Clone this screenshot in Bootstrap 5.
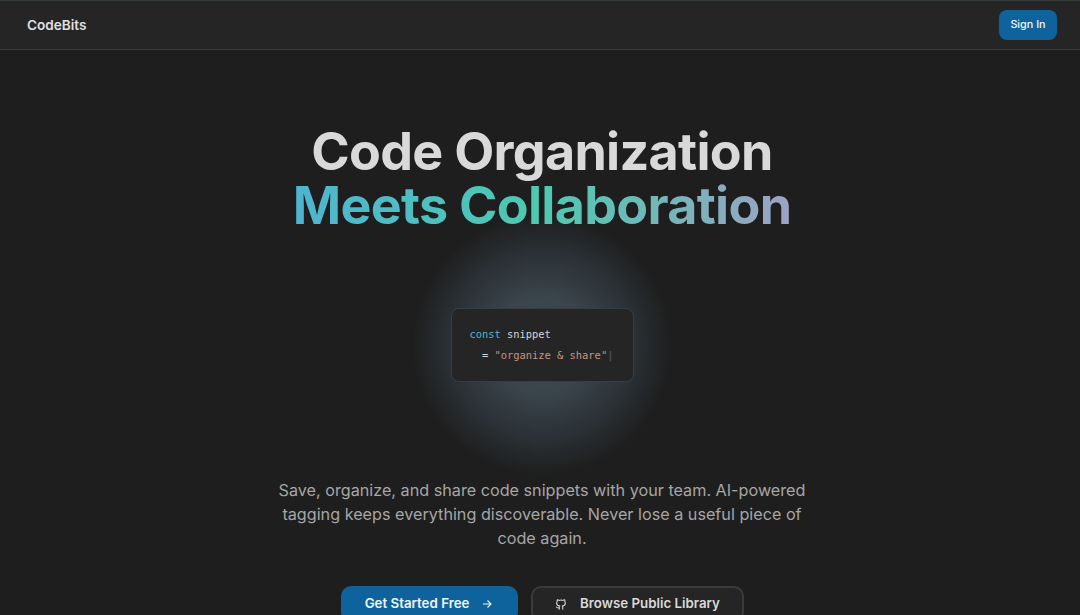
<!DOCTYPE html>
<html lang="en">
<head>
    <meta charset="UTF-8">
    <meta name="viewport" content="width=device-width, initial-scale=1.0">
    <title>CodeBits</title>
    <link rel="stylesheet" href="https://cdn.jsdelivr.net/npm/bootstrap@5.3.0/dist/css/bootstrap.min.css">
    <style>
        body {
            background: #1e1e1e;
            font-family: Inter, "Liberation Sans", sans-serif;
            height: 615px;
            overflow: hidden;
        }
        .top-bar {
            height: 50px;
            background: #252526;
            border-top: 1px solid #33383b;
            border-bottom: 1px solid #373c3f;
            padding: 0 23px 0 27px;
        }
        .brand-name {
            color: #e0e0e0;
            font-size: 13.6px;
            font-weight: 600;
        }
        .sign-btn {
            background: #0e639c;
            color: #f2f5f7;
            font-size: 10.8px;
            font-weight: 500;
            height: 30px;
            width: 58px;
            padding: 0;
            border: 0;
            border-radius: 8px;
        }
        .hero-wrap {
            padding-left: 4px;
        }
        .hero-title {
            font-size: 52px;
            font-weight: 700;
            line-height: 54px;
            letter-spacing: -0.7px;
            color: #d9d9d9;
            margin: 75px 0 0;
        }
        .grad-text {
            background: linear-gradient(90deg, #4fb4d0 0%, #4ec9b0 50%, #9ca3c4 100%);
            -webkit-background-clip: text;
            background-clip: text;
            color: transparent;
        }
        .glow-box {
            height: 267px;
            margin-top: -22px;
            background: radial-gradient(circle 130px at 50% 50%, #3f4a52 0%, #3a444b 38%, #2c3338 68%, #1e1e1e 100%);
            background-size: 260px 260px;
            background-repeat: no-repeat;
            background-position: center;
        }
        .code-card {
            width: 183px;
            height: 74px;
            background: #252526;
            border: 1px solid #373e43;
            border-radius: 8px;
            padding: 15px 18px;
            font-family: "DejaVu Sans Mono", monospace;
            font-size: 10.4px;
            line-height: 21px;
            color: #d4d4d4;
        }
        .kw { color: #4fb4d0; }
        .str { color: #ce9178; }
        .caret { color: #5a5f63; }
        .hero-sub {
            max-width: 545px;
            font-size: 16.2px;
            line-height: 24px;
            color: #a6a6a6;
            margin: 0 auto;
        }
        .cta-row {
            margin-top: 36px;
            gap: 13px;
        }
        .cta-main, .cta-alt {
            height: 36px;
            font-size: 13.3px;
            font-weight: 600;
            border-radius: 10px;
            padding: 0;
            gap: 12px;
            white-space: nowrap;
        }
        .cta-main {
            background: #0e639c;
            color: #f2f5f7;
            border: 0;
            width: 177px;
        }
        .cta-alt {
            background: #252526;
            color: #d9d9d9;
            border: 2px solid #373c3f;
            width: 213px;
        }
    </style>
</head>
<body>
    <nav class="top-bar d-flex align-items-center justify-content-between">
        <span class="brand-name">CodeBits</span>
        <button class="btn sign-btn">Sign In</button>
    </nav>

    <main class="hero-wrap text-center">
        <h1 class="hero-title">Code Organization<br><span class="grad-text">Meets Collaboration</span></h1>

        <div class="glow-box d-flex align-items-center justify-content-center">
            <div class="code-card text-start text-nowrap">
                <div><span class="kw">const</span> snippet</div>
                <div>&nbsp;&nbsp;= <span class="str">"organize &amp; share"</span><span class="caret">|</span></div>
            </div>
        </div>

        <p class="hero-sub">Save, organize, and share code snippets with your team. AI-powered tagging keeps everything discoverable. Never lose a useful piece of code again.</p>

        <div class="cta-row d-flex justify-content-center">
            <button class="btn cta-main d-flex align-items-center justify-content-center">
                Get Started Free
                <svg width="12" height="12" viewBox="0 0 12 12" fill="none" stroke="currentColor" stroke-width="1.1"><path d="M2 6h8M6.500 2.500 10 6l-3.500 3.500"/></svg>
            </button>
            <button class="btn cta-alt d-flex align-items-center justify-content-center">
                <svg width="14" height="14" viewBox="0 0 16 16" fill="none" stroke="currentColor" stroke-width="1.2" stroke-linejoin="round" stroke-linecap="round"><path d="M6 14v-2.200c0-.7.2-1.200.6-1.600C4.600 10 3 9.100 3 6.800c0-.7.3-1.300.7-1.800-.1-.5-.1-1.200.1-1.900 0 0 .8-.1 2 .8a7 7 0 0 1 4.400 0c1.200-.9 2-.8 2-.8.2.7.2 1.400.1 1.900.4.500.7 1.100.7 1.800 0 2.300-1.600 3.200-3.600 3.400.4.400.6.900.6 1.600V14M6 12.500c-2 .6-2.500-.7-3.200-1"/></svg>
                Browse Public Library
            </button>
        </div>
    </main>

    <script src="https://cdn.jsdelivr.net/npm/bootstrap@5.3.0/dist/js/bootstrap.bundle.min.js"></script>
</body>
</html>
